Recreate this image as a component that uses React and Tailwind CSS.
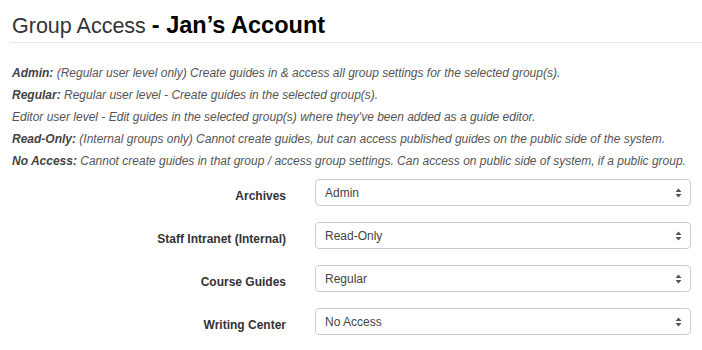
import React from 'react';

const rules = [
  { term: 'Admin:', text: ' (Regular user level only) Create guides in & access all group settings for the selected group(s).' },
  { term: 'Regular:', text: ' Regular user level - Create guides in the selected group(s).' },
  { term: null, text: "Editor user level - Edit guides in the selected group(s) where they've been added as a guide editor." },
  { term: 'Read-Only:', text: ' (Internal groups only) Cannot create guides, but can access published guides on the public side of the system.' },
  { term: 'No Access:', text: ' Cannot create guides in that group / access group settings. Can access on public side of system, if a public group.' },
];

const groups = [
  { name: 'Archives', value: 'Admin' },
  { name: 'Staff Intranet (Internal)', value: 'Read-Only' },
  { name: 'Course Guides', value: 'Regular' },
  { name: 'Writing Center', value: 'No Access' },
];

// native mac-style select arrows
const Arrows = () => (
  <svg width="7" height="10" viewBox="0 0 7 10" className="shrink-0">
    <path d="M3.5 0.5 L6.5 4 L0.5 4 Z" fill="#555" />
    <path d="M3.5 9.5 L6.5 6 L0.5 6 Z" fill="#555" />
  </svg>
);

const App = () => {
  return (
    <div className="w-[702px] h-[350px] bg-white overflow-hidden font-['Liberation_Sans',Arial,sans-serif]">
      {/* header */}
      <div className="ml-[10px] pt-[11px] pb-[2px] border-b border-[#e6e6e6]">
        <h1 className="pl-[2px] text-[21.5px] leading-[28px] text-[#333] font-normal">
          Group Access <span className="text-[23.5px] font-bold text-black">- Jan’s Account</span>
        </h1>
      </div>

      {/* level descriptions */}
      <div className="mt-[19px] pl-[12px] text-[12px] leading-[22px] italic text-[#555]">
        {rules.map((r, i) => (
          <p key={i} className="whitespace-nowrap">
            {r.term && <strong className="font-bold text-[#444]">{r.term}</strong>}
            {r.text}
          </p>
        ))}
      </div>

      {/* group selects */}
      <div className="mt-[7px] flex flex-col gap-[16px]">
        {groups.map((g) => (
          <div key={g.name} className="flex items-start">
            <label className="w-[286px] shrink-0 pt-[9px] text-right text-[12px] leading-[17px] font-bold text-[#333]">
              {g.name}
            </label>
            <div className="ml-[29px] mr-[11px] flex-1 h-[27px] flex items-center justify-between pl-[9px] pr-[8px] border border-[#ccc] rounded-[4px] bg-white text-[12px] text-[#444]">
              <span>{g.value}</span>
              <Arrows />
            </div>
          </div>
        ))}
      </div>
    </div>
  );
};

export default App;
